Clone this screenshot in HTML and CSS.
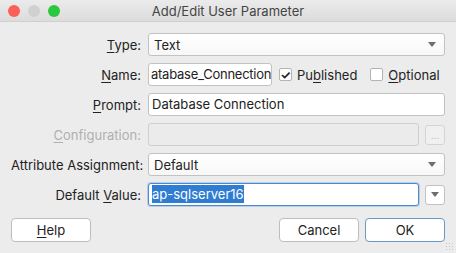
FILE: index.html
```html
<!DOCTYPE html>
<html lang="en">
<head>
  <meta charset="UTF-8" />
  <title>Add/Edit User Parameter</title>
  <link rel="stylesheet" href="styles.css">
</head>
<body>

  <div class="window">
    <div class="titlebar">
      <div class="lights">
        <span class="light red"></span>
        <span class="light gray"></span>
        <span class="light green"></span>
      </div>
      <div class="title">Add/Edit User Parameter</div>
      <div></div>
    </div>

    <div class="content">
      <div class="form-grid">
        <label class="lbl"><u>T</u>ype:</label>
        <div class="combo"><span>Text</span><span class="arrow"></span></div>

        <label class="lbl"><u>N</u>ame:</label>
        <div class="name-row">
          <div class="field name-field">atabase_Connection</div>
          <label class="check"><span class="box">&#10003;</span><span>Pu<u>b</u>lished</span></label>
          <label class="check"><span class="box"></span><span><u>O</u>ptional</span></label>
        </div>

        <label class="lbl"><u>P</u>rompt:</label>
        <div class="field">Database Connection</div>

        <label class="lbl disabled"><u>C</u>onfiguration:</label>
        <div class="with-btn">
          <div class="field off"></div>
          <div class="mini-btn off">...</div>
        </div>

        <label class="lbl">Attribute Assignment:</label>
        <div class="combo"><span>Default</span><span class="arrow"></span></div>

        <label class="lbl">Default <u>V</u>alue:</label>
        <div class="with-btn">
          <div class="field focus"><span class="sel">ap-sqlserver16</span></div>
          <div class="mini-btn"><span class="arrow"></span></div>
        </div>
      </div>

      <div class="buttons">
        <button class="btn"><u>H</u>elp</button>
        <div class="spacer"></div>
        <button class="btn">Cancel</button>
        <button class="btn default">OK</button>
      </div>
    </div>

    <div class="grip"></div>
  </div>

</body>
</html>
```

FILE: styles.css
```css
* {
  box-sizing: border-box;
}
body {
  margin: 0;
  font-family: Inter, 'Liberation Sans', sans-serif;
  font-size: 13px;
  color: #222;
  background: #ececec;
}
u {
  text-decoration-thickness: 1px;
  text-underline-offset: 2px;
}
.window {
  position: relative;
  width: 456px;
  height: 253px;
  background: #ececec;
  overflow: hidden;
}
.titlebar {
  height: 22px;
  display: grid;
  grid-template-columns: 1fr auto 1fr;
  align-items: center;
  background: linear-gradient(#ebebeb, #dcdcdc);
  border-bottom: 1px solid #cfcfcf;
  border-radius: 5px 5px 0 0;
}
.lights {
  display: flex;
  gap: 8px;
  padding-left: 8px;
}
.light {
  width: 12px;
  height: 12px;
  border-radius: 50%;
}
.light.red { background: #fc5f57; }
.light.gray { background: #d0d0d0; }
.light.green { background: #2ac840; }
.title {
  color: #444;
  font-size: 13px;
}
.content {
  padding: 11px 11px 0 11px;
}
.form-grid {
  display: grid;
  grid-template-columns: 130px minmax(0, 1fr);
  column-gap: 7px;
  row-gap: 7px;
  align-items: center;
}
.lbl {
  text-align: right;
  white-space: nowrap;
}
.lbl.disabled {
  color: #b0b0b0;
}
.field {
  height: 23px;
  line-height: 21px;
  padding: 0 3px;
  background: #fff;
  border: 1px solid #c2c2c2;
  border-radius: 3px;
  white-space: nowrap;
  overflow: hidden;
}
.field.off {
  background: #ebebeb;
  border-color: #cfcfcf;
  flex: 1;
}
.field.focus {
  flex: 1;
  border-color: #4a8ad0;
  box-shadow: 0 0 0 1px rgba(90, 150, 220, 0.35);
}
.sel {
  background: #2f7dd3;
  color: #fff;
  padding: 1px 0;
}
.combo {
  height: 23px;
  display: flex;
  align-items: center;
  justify-content: space-between;
  padding: 0 8px 0 5px;
  background: linear-gradient(#fff, #f7f7f7);
  border: 1px solid #c2c2c2;
  border-radius: 3px;
}
.arrow {
  width: 0;
  height: 0;
  border-left: 4px solid transparent;
  border-right: 4px solid transparent;
  border-top: 5px solid #6d6d6d;
}
.name-row {
  display: flex;
  align-items: center;
}
.name-field {
  width: 124px;
  flex: none;
  margin-right: 7px;
  padding: 0 2px;
  letter-spacing: -0.25px;
}
.check {
  display: flex;
  align-items: center;
  gap: 5px;
  margin-right: 13px;
  white-space: nowrap;
}
.box {
  width: 13px;
  height: 13px;
  background: #fff;
  border: 1px solid #b4b4b4;
  border-radius: 2px;
  font-size: 12px;
  font-weight: bold;
  line-height: 11px;
  text-align: center;
  color: #222;
}
.with-btn {
  display: flex;
  align-items: center;
  gap: 6px;
}
.mini-btn {
  width: 20px;
  height: 20px;
  flex: none;
  display: flex;
  align-items: center;
  justify-content: center;
  background: #fff;
  border: 1px solid #c2c2c2;
  border-radius: 3px;
  font-size: 10px;
}
.mini-btn.off {
  background: #f0f0f0;
  color: #b8b8b8;
  border-color: #d4d4d4;
}
.buttons {
  display: flex;
  gap: 6px;
  margin-top: 12px;
}
.spacer {
  flex: 1;
}
.btn {
  width: 80px;
  height: 24px;
  font-family: inherit;
  font-size: 13px;
  color: #222;
  background: #fff;
  border: 1px solid #bdbdbd;
  border-radius: 4px;
  padding: 0;
}
.btn.default {
  border-color: #6a98c8;
}
.grip {
  position: absolute;
  right: 1px;
  bottom: 1px;
  width: 10px;
  height: 10px;
  background: radial-gradient(circle, #c4c4c4 0.8px, transparent 1px) 0 0 / 3px 3px;
}
```
